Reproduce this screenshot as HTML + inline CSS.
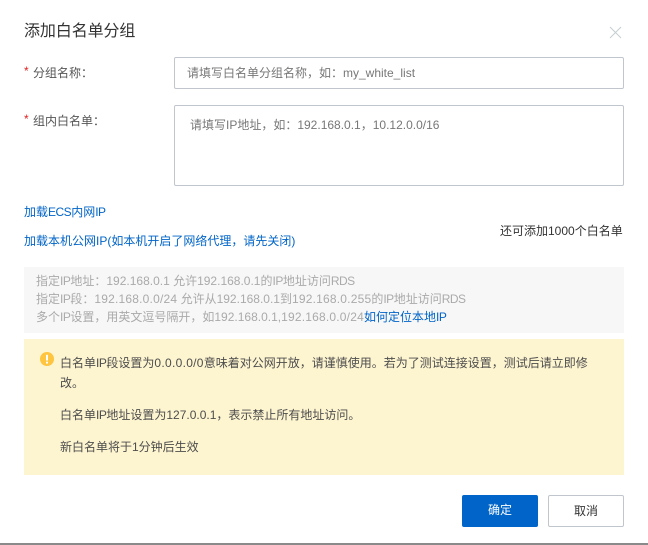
<!DOCTYPE html>
<html lang="zh">
<head>
<meta charset="utf-8">
<style>
html,body{margin:0;padding:0;background:#fff}
body{width:648px;height:545px;position:relative;overflow:hidden;font-family:"Liberation Sans","Noto Sans CJK SC",sans-serif;font-size:12px;color:#333}
.a{position:absolute;white-space:nowrap}
.box{position:absolute;box-sizing:border-box;border:1px solid #c0c6cc;border-radius:2px;background:#fff}
.link{color:#0064c8}
.ph{color:#777}
.star{color:#e02020}
.n{letter-spacing:-.5px}
.s{letter-spacing:.2px}
.t{color:#4d4d4d}
</style>
</head>
<body>
<div class="a" style="left:24px;top:21px;font-size:16px;line-height:22px;letter-spacing:-.1px;color:#333">添加白名单分组</div>
<svg class="a" style="left:609px;top:26px" width="13" height="13" viewBox="0 0 13 13"><path d="M1 1L12 12M12 1L1 12" stroke="#c4cfd0" stroke-width="1" fill="none"/></svg>

<div class="a star" style="left:24px;top:62px;line-height:18px">*</div>
<div class="a" style="left:33px;top:64px;line-height:18px;color:#555">分组名称：</div>
<div class="box" style="left:174px;top:57px;width:450px;height:32px"></div>
<div class="a ph" style="left:187px;top:64px;line-height:18px">请填写白名单分组名称，如：my_white_list</div>

<div class="a star" style="left:24px;top:110px;line-height:18px">*</div>
<div class="a" style="left:33px;top:112px;line-height:18px;color:#555">组内白名单：</div>
<div class="box" style="left:174px;top:105px;width:450px;height:81px"></div>
<div class="a ph" style="left:190px;top:116px;line-height:18px">请填写IP地址，如：192.168.0.1，10.12.0.0/16</div>

<div class="a link" style="left:24px;top:203px;line-height:18px">加载<span class="n">ECS</span>内网<span class="n">IP</span></div>
<div class="a link" style="left:24px;top:232px;line-height:18px">加载本机公网IP(如本机开启了网络代理，请先关闭)</div>
<div class="a" style="left:500px;top:222px;line-height:18px;color:#333">还可添加1000个白名单</div>

<div class="a" style="left:24px;top:267px;width:600px;height:66px;background:#f7f7f7"></div>
<div class="a" style="left:36px;top:272px;line-height:18px;color:#aaa">指定<span class="n">IP</span>地址：192.168.0.1 允许192.168.0.1的<span class="n">IP</span>地址访问<span class="n">RDS</span></div>
<div class="a" style="left:36px;top:290px;line-height:18px;color:#aaa">指定<span class="n">IP</span>段：<span class="s">192.168.0.0/24</span> 允许从192.168.0.1到<span class="s">192.168.0.255</span>的<span class="n">IP</span>地址访问<span class="n">RDS</span></div>
<div class="a" style="left:36px;top:308px;line-height:18px;color:#aaa">多个<span class="n">IP</span>设置，用英文逗号隔开，如192.168.0.1,<span class="s">192.168.0.0/24</span><span class="link">如何定位本地<span class="n">IP</span></span></div>

<div class="a" style="left:24px;top:339px;width:600px;height:136px;background:#fdf4d0"></div>
<svg class="a" style="left:40px;top:352px" width="14" height="14" viewBox="0 0 14 14"><circle cx="7" cy="7" r="7" fill="#ffc440"/><rect x="6" y="2.8" width="2" height="5.8" rx="0.6" fill="#fff"/><rect x="6" y="9.6" width="2" height="2" rx="0.6" fill="#fff"/></svg>
<div class="a t" style="left:60px;top:354px;line-height:18px">白名单<span class="n">IP</span>段设置为<span style="letter-spacing:.3px">0.0.0.0/0</span>意味着对公网开放，请谨慎使用。若为了测试连接设置，测试后请立即修</div>
<div class="a t" style="left:60px;top:374px;line-height:18px">改。</div>
<div class="a t" style="left:60px;top:406px;line-height:18px">白名单<span class="n">IP</span>地址设置为127.0.0.1，表示禁止所有地址访问。</div>
<div class="a t" style="left:60px;top:438px;line-height:18px">新白名单将于1分钟后生效</div>

<div class="a" style="left:462px;top:495px;width:76px;height:32px;line-height:30px;background:#0064c8;border-radius:2px;color:#fff;text-align:center">确定</div>
<div class="box" style="left:548px;top:495px;width:76px;height:32px;line-height:30px;text-align:center;color:#333">取消</div>

<div class="a" style="left:0;top:543px;width:648px;height:2px;background:#8a8a8a"></div>
</body>
</html>
